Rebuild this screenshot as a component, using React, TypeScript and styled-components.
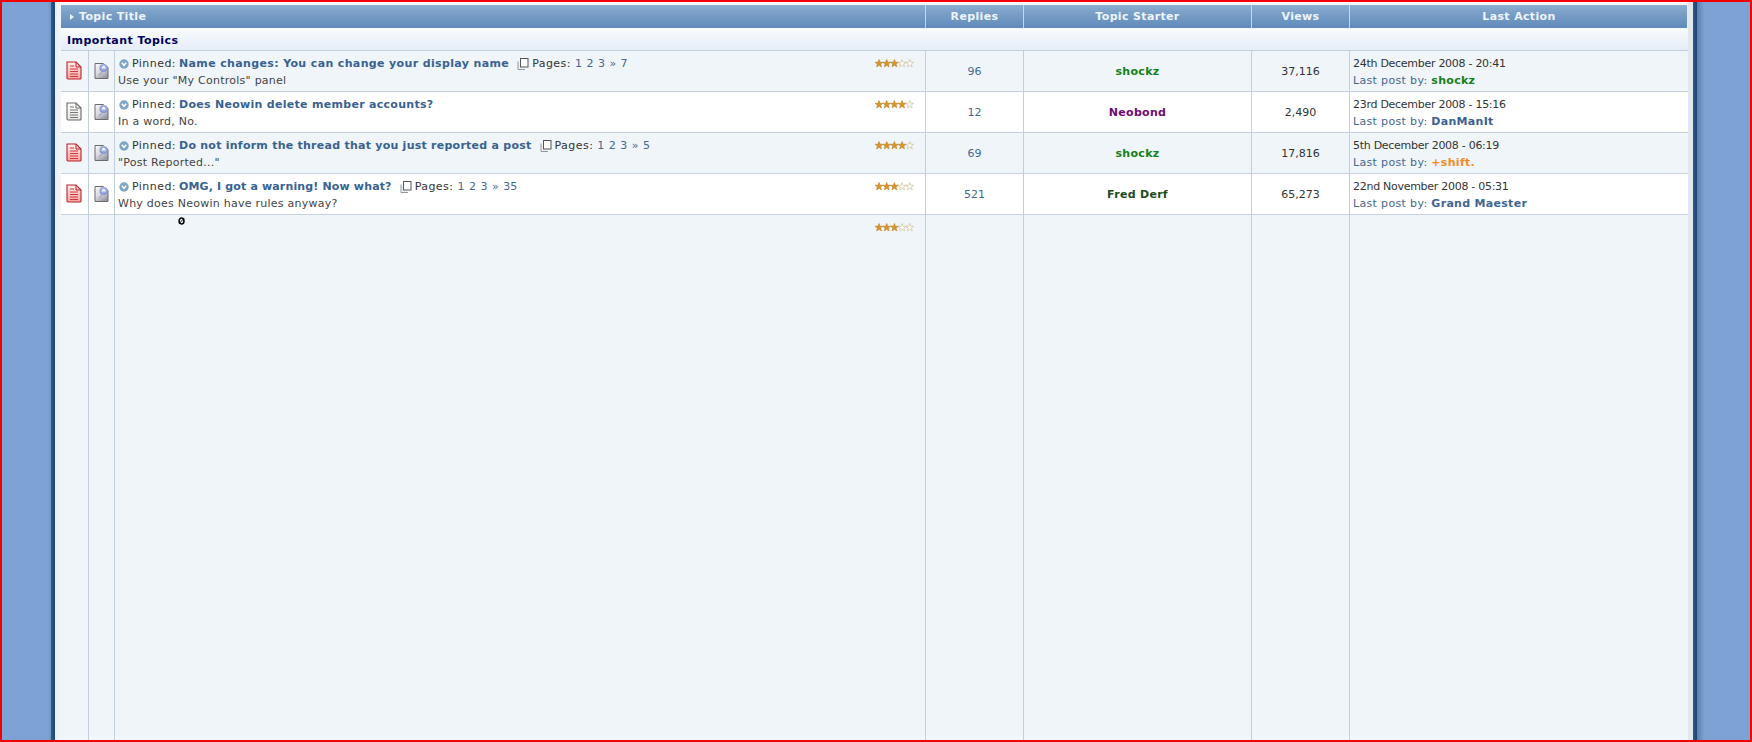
import React from "react";
import styled, { createGlobalStyle } from "styled-components";

const Global = createGlobalStyle`
  html, body { margin: 0; padding: 0; height: 100%; overflow: hidden; background: #7ca3d3; }
  #root { height: 100%; }
  * { box-sizing: border-box; }
`;

const COLS = "28px 26px 811px 98px 228px 98px 338px";

const Frame = styled.div`
  height: 742px;
  width: 1752px;
  border: 2px solid #f20000;
  display: flex;
  background: #7ca3d3;
  font: 11px/17px "DejaVu Sans", Verdana, sans-serif;
  color: #333;
`;
const LeftBand = styled.div`
  width: 49px;
  flex: none;
  background: linear-gradient(to right, #7ca3d3 0, #7ca3d3 46px, #6f93c0 49px);
`;
const RightBand = styled.div`
  flex: 1;
  background: linear-gradient(to right, #5a7eae 0, #7ca3d3 7px);
`;
const DarkEdge = styled.div`
  width: 4px;
  flex: none;
  background: linear-gradient(to right, #2f5a92, #1d4273);
`;
const Page = styled.div`
  width: 1638px;
  flex: none;
  padding: 3px 5px 0 6px;
  display: flex;
  flex-direction: column;
  background: linear-gradient(to right, #e8eff8 0, #f2f6fb 6px, #f2f6fb 1632px, #e2e7ee 1633px);
`;
const Table = styled.div`
  flex: 1;
  display: flex;
  flex-direction: column;
`;
const HeaderRow = styled.div`
  display: grid;
  grid-template-columns: ${COLS};
  height: 23px;
  background: linear-gradient(to bottom, #8eaed2 0, #7ea2c9 6px, #5f8bba 100%);
  color: #eef4fb;
  font-weight: bold;
  line-height: 24px;
  letter-spacing: 0.35px;
  flex: none;
  width: 1626px;
`;
const HeadTitle = styled.div`
  grid-column: span 3;
  display: flex;
  align-items: center;
  padding-left: 9px;
  gap: 5px;
  border-right: 1px solid #c4d6e8;
`;
const HeadCell = styled.div`
  text-align: center;
  border-right: 1px solid #c4d6e8;
  &:last-child { border-right: 0; }
`;
const CategoryRow = styled.div`
  height: 23px;
  flex: none;
  padding: 0 6px;
  font-weight: bold;
  line-height: 23px;
  letter-spacing: 0.45px;
  color: #00005c;
  background: linear-gradient(to bottom, #f8fbfe, #e5edf7);
  border-top: 1px solid #f4f8fc;
  border-bottom: 1px solid #c4cfdd;
`;
const Row = styled.div<{ $alt?: boolean; $fill?: boolean }>`
  display: grid;
  grid-template-columns: ${COLS};
  height: ${(p) => (p.$fill ? "auto" : "41px")};
  flex: ${(p) => (p.$fill ? "1" : "none")};
  background: ${(p) => (p.$alt ? "#eff5f9" : "#fff")};
  border-bottom: ${(p) => (p.$fill ? "0" : "1px solid #c5cfdd")};
`;
const Cell = styled.div`
  border-right: 1px solid #c2cddd;
  &:last-child { border-right: 0; }
`;
const IconCell = styled(Cell)<{ $offset: number }>`
  display: flex;
  justify-content: center;
  padding-top: ${(p) => p.$offset}px;
  padding-right: 1px;
`;
const TitleCell = styled(Cell)`
  position: relative;
  padding: 4px 3px 0;
`;
const TitleLine = styled.div`
  display: flex;
  align-items: center;
  height: 17px;
  white-space: nowrap;
`;
const Drop = styled.svg`
  width: 10px;
  height: 10px;
  margin: 1px 3px 0 1px;
  flex: none;
`;
const Label = styled.span`
  letter-spacing: 0.45px;
`;
const TopicLink = styled.span<{ $track: number }>`
  font-weight: bold;
  color: #396290;
  margin-left: 3px;
  letter-spacing: ${(p) => p.$track}px;
`;
const PagesIcon = styled.svg`
  width: 12px;
  height: 12px;
  margin: 0 3px 0 8px;
  flex: none;
`;
const PageNums = styled.span`
  color: #46688f;
  margin-left: 4px;
  word-spacing: 1px;
`;
const Desc = styled.div`
  white-space: nowrap;
  color: #444;
  letter-spacing: 0.25px;
`;
const Stars = styled.svg`
  position: absolute;
  right: 11px;
  top: 8px;
  width: 39px;
  height: 9px;
`;
const CursorMark = styled.svg`
  display: block;
  width: 7px;
  height: 8px;
  margin: -2px 0 0 60px;
`;
const Center = styled(Cell)`
  display: flex;
  align-items: center;
  justify-content: center;
`;
const Replies = styled(Center)`
  color: #46688f;
`;
const Starter = styled(Center)<{ $color: string }>`
  color: ${(p) => p.$color};
  font-weight: bold;
  letter-spacing: 0.3px;
`;
const LastCell = styled(Cell)`
  padding: 4px 3px 0;
  white-space: nowrap;
`;
const DateLine = styled.div`
  letter-spacing: -0.28px;
`;
const LastBy = styled.div`
  color: #46688f;
  letter-spacing: 0.34px;
`;
const Author = styled.span<{ $color: string }>`
  color: ${(p) => p.$color};
  font-weight: bold;
  letter-spacing: 0.3px;
`;

const DocIcon = ({ red }: { red?: boolean }) => {
  const stroke = red ? "#b8232a" : "#6a6a66";
  const line = red ? "#d0383f" : "#777";
  return (
    <svg width="16" height="19" viewBox="0 0 16 19">
      <defs>
        <linearGradient id={red ? "dr" : "dg"} x1="0" y1="0" x2="0" y2="1">
          <stop offset="0" stopColor={red ? "#fff0ee" : "#fff"} />
          <stop offset="1" stopColor={red ? "#fba5a0" : "#e6e6e0"} />
        </linearGradient>
      </defs>
      <path d="M1 1h9l5 5v11a1 1 0 0 1-1 1H2a1 1 0 0 1-1-1z" fill={`url(#${red ? "dr" : "dg"})`} stroke={stroke} strokeWidth="1.100" />
      <path d="M10 1v5h5" fill="none" stroke={stroke} strokeWidth="1" />
      <path d="M4 5h4M4 8h8M4 10.500h8M4 13h8M4 15.500h8" stroke={line} strokeWidth="1" />
    </svg>
  );
};

const ReadIcon = () => (
  <svg width="15" height="17" viewBox="0 0 15 17">
    <defs>
      <linearGradient id="rg" x1="0" y1="0" x2="0.6" y2="1">
        <stop offset="0" stopColor="#fafafa" />
        <stop offset="0.6" stopColor="#d6d6dc" />
        <stop offset="1" stopColor="#9a9aa6" />
      </linearGradient>
      <radialGradient id="rb" cx="0.5" cy="0.4" r="0.7">
        <stop offset="0" stopColor="#c6d0f2" />
        <stop offset="1" stopColor="#6f7fc6" />
      </radialGradient>
    </defs>
    <path d="M1 1.500h8l5 4v11H1z" fill="url(#rg)" stroke="#6b6b6b" strokeWidth="1" />
    <circle cx="9.500" cy="6" r="4" fill="url(#rb)" />
    <path d="M8 6.500l1.800-2 1.700 2" fill="none" stroke="#fff" strokeWidth="1.100" />
    <path d="M5 13l3-3" stroke="#a5a8cc" strokeWidth="1.500" />
  </svg>
);

const DropIcon = () => (
  <Drop viewBox="0 0 10 10">
    <circle cx="5" cy="5" r="4.700" fill="#7fa5c6" />
    <path d="M2.800 3.800L5 6.300l2.200-2.500" fill="none" stroke="#fff" strokeWidth="1.500" />
  </Drop>
);

const PagesGlyph = () => (
  <PagesIcon viewBox="0 0 12 12">
    <path d="M1 3.500v8h7" fill="#eef1f5" stroke="#8f98a3" strokeWidth="1" />
    <rect x="3.500" y="0.500" width="7.500" height="8.500" fill="#fff" stroke="#555" strokeWidth="1" />
  </PagesIcon>
);

const StarPath = ({ x, on }: { x: number; on: boolean }) => (
  <path
    transform={`translate(${x} 0)`}
    d="M4 .5l1 2.700 2.900.1-2.300 1.800.8 2.800L4 6.300 1.600 7.900l.8-2.800L.1 3.300 3 3.200z"
    fill={on ? "#d9952c" : "#fffef8"}
    stroke={on ? "#b87f22" : "#c9b58c"}
    strokeWidth="0.6"
  />
);

const Rating = ({ n }: { n: number }) => (
  <Stars viewBox="0 0 39 9">
    {[0, 1, 2, 3, 4].map((i) => (
      <StarPath key={i} x={i * 7.7} on={i < n} />
    ))}
  </Stars>
);

type Topic = {
  red: boolean;
  title: string;
  track: number;
  pages?: string;
  desc: string;
  stars: number;
  replies: string;
  starter: string;
  starterColor: string;
  views: string;
  date: string;
  last: string;
  lastColor: string;
};

const GREEN = "#15801a";
const LINK = "#3c5f92";

const topics: Topic[] = [
  { red: true, title: "Name changes: You can change your display name", track: 0.36, pages: "1 2 3 » 7", desc: 'Use your "My Controls" panel', stars: 3, replies: "96", starter: "shockz", starterColor: GREEN, views: "37,116", date: "24th December 2008 - 20:41", last: "shockz", lastColor: GREEN },
  { red: false, title: "Does Neowin delete member accounts?", track: 0.29, desc: "In a word, No.", stars: 4, replies: "12", starter: "Neobond", starterColor: "#6d0a78", views: "2,490", date: "23rd December 2008 - 15:16", last: "DanManIt", lastColor: LINK },
  { red: true, title: "Do not inform the thread that you just reported a post", track: 0.25, pages: "1 2 3 » 5", desc: '"Post Reported..."', stars: 4, replies: "69", starter: "shockz", starterColor: GREEN, views: "17,816", date: "5th December 2008 - 06:19", last: "+shift.", lastColor: "#f28c1c" },
  { red: true, title: "OMG, I got a warning! Now what?", track: 0.15, pages: "1 2 3 » 35", desc: "Why does Neowin have rules anyway?", stars: 3, replies: "521", starter: "Fred Derf", starterColor: "#1c4a1c", views: "65,273", date: "22nd November 2008 - 05:31", last: "Grand Maester", lastColor: "#3f6690" },
];

export default function App() {
  return (
    <>
      <Global />
      <Frame>
        <LeftBand />
        <DarkEdge />
        <Page>
          <Table>
            <HeaderRow>
              <HeadTitle>
                <svg width="4" height="6" viewBox="0 0 4 6">
                  <path d="M0 0l4 3-4 3z" fill="#eaf1f8" />
                </svg>
                Topic Title
              </HeadTitle>
              <HeadCell>Replies</HeadCell>
              <HeadCell>Topic Starter</HeadCell>
              <HeadCell>Views</HeadCell>
              <HeadCell>Last Action</HeadCell>
            </HeaderRow>
            <CategoryRow>Important Topics</CategoryRow>
            {topics.map((t, i) => (
              <Row key={t.title} $alt={i % 2 === 0}>
                <IconCell $offset={10}>
                  <DocIcon red={t.red} />
                </IconCell>
                <IconCell $offset={11}>
                  <ReadIcon />
                </IconCell>
                <TitleCell>
                  <TitleLine>
                    <DropIcon />
                    <Label>Pinned:</Label>
                    <TopicLink $track={t.track}>{t.title}</TopicLink>
                    {t.pages && (
                      <>
                        <PagesGlyph />
                        <Label>Pages:</Label>
                        <PageNums>{t.pages}</PageNums>
                      </>
                    )}
                  </TitleLine>
                  <Desc>{t.desc}</Desc>
                  <Rating n={t.stars} />
                </TitleCell>
                <Replies>{t.replies}</Replies>
                <Starter $color={t.starterColor}>{t.starter}</Starter>
                <Center>{t.views}</Center>
                <LastCell>
                  <DateLine>{t.date}</DateLine>
                  <LastBy>
                    Last post by: <Author $color={t.lastColor}>{t.last}</Author>
                  </LastBy>
                </LastCell>
              </Row>
            ))}
            <Row $alt $fill>
              <Cell />
              <Cell />
              <TitleCell>
                <CursorMark viewBox="0 0 8 9">
                  <ellipse cx="4" cy="4.500" rx="2.800" ry="3.400" fill="none" stroke="#000" strokeWidth="1.800" />
                  <path d="M1 8l6-7" stroke="#000" strokeWidth="1" />
                </CursorMark>
                <Rating n={3} />
              </TitleCell>
              <Cell />
              <Cell />
              <Cell />
              <Cell />
            </Row>
          </Table>
        </Page>
        <DarkEdge />
        <RightBand />
      </Frame>
    </>
  );
}
